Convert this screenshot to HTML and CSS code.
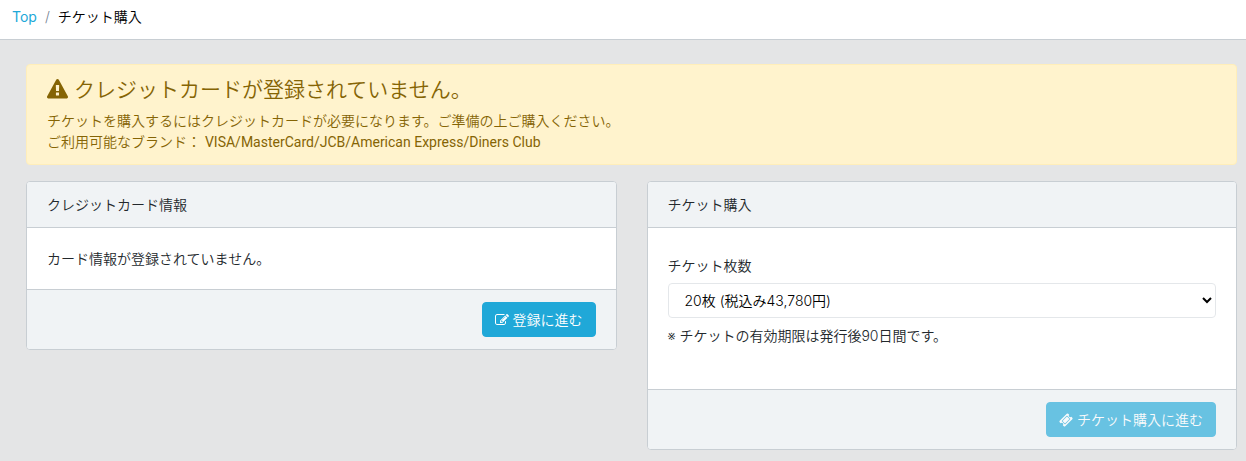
FILE: index.html
```html
<!DOCTYPE html>
<html lang="ja">
<head>
  <meta charset="UTF-8" />
  <meta name="viewport" content="width=device-width, initial-scale=1" />
  <title>チケット購入</title>
  <link rel="stylesheet" href="styles.css">
</head>
<body>
  <nav aria-label="breadcrumb">
    <ol class="breadcrumb">
      <li class="breadcrumb-item"><a href="#">Top</a></li>
      <li class="breadcrumb-item active" aria-current="page">チケット購入</li>
    </ol>
  </nav>

  <main class="container">
    <div class="alert" role="alert">
      <h4 class="alert-heading"><svg class="icon" viewBox="0 0 1792 1792" aria-hidden="true"><path d="M1024 1375v-190q0-14-9.5-23.5t-22.5-9.5h-198q-13 0-22.5 9.5t-9.5 23.5v190q0 14 9.5 23.5t22.5 9.5h198q13 0 22.5-9.5t9.5-23.5zm-2-374l18-459q0-12-10-19-13-11-24-11h-220q-11 0-24 11-10 7-10 21l17 457q0 10 10 16.5t24 6.5h185q14 0 23.5-6.5t10.5-16.5zm-14-934l768 1408q35 63-2 126-17 29-46.5 46t-63.5 17h-1536q-34 0-63.5-17t-46.5-46q-37-63-2-126l768-1408q17-31 47-49t65-18 65 18 47 49z"/></svg> クレジットカードが登録されていません。</h4>
      <p>チケットを購入するにはクレジットカードが必要になります。ご準備の上ご購入ください。<br>
      ご利用可能なブランド： <span class="brands">VISA/MasterCard/JCB/American Express/Diners Club</span></p>
    </div>

    <div class="row">
      <!-- Credit card -->
      <section class="card">
        <div class="card-header">クレジットカード情報</div>
        <div class="card-body">カード情報が登録されていません。</div>
        <div class="card-footer">
          <button type="button" class="btn"><svg class="icon" viewBox="0 0 1792 1792" aria-hidden="true"><path d="M888 1184l116-116-152-152-116 116v56h96v96h56zm440-720q-16-16-33 1l-350 350q-17 17-1 33t33-1l350-350q17-17 1-33zm80 594v190q0 119-84.5 203.5t-203.5 84.5h-832q-119 0-203.5-84.5t-84.5-203.5v-832q0-119 84.5-203.5t203.5-84.5h832q63 0 117 25 15 7 18 23 3 17-9 29l-49 49q-14 14-32 8-23-6-45-6h-832q-66 0-113 47t-47 113v832q0 66 47 113t113 47h832q66 0 113-47t47-113v-126q0-13 9-22l64-64q15-15 35-7t20 29zm-96-738l288 288-672 672h-288v-288zm444 132l-92 92-288-288 92-92q28-28 68-28t68 28l152 152q28 28 28 68t-28 68z"/></svg> 登録に進む</button>
        </div>
      </section>

      <!-- Ticket purchase -->
      <section class="card">
        <div class="card-header">チケット購入</div>
        <div class="card-body">
          <div class="form-group">
            <label for="ticketCount">チケット枚数</label>
            <select id="ticketCount" class="form-control">
              <option>20枚 (税込み43,780円)</option>
            </select>
            <p class="help">※ チケットの有効期限は発行後90日間です。</p>
          </div>
        </div>
        <div class="card-footer">
          <button type="button" class="btn" disabled><svg class="icon" viewBox="0 0 1792 1792" aria-hidden="true"><path d="M1024 452l316 316-572 572-316-316zm-211 979l618-618q19-19 19-45t-19-45l-362-362q-18-18-45-18t-45 18l-618 618q-19 19-19 45t19 45l362 362q18 18 45 18t45-18zm889-637l-907 908q-37 37-90.5 37t-90.5-37l-126-126q56-56 56-136t-56-136-136-56-136 56l-125-126q-37-37-37-90.5t37-90.5l907-906q37-37 90.5-37t90.5 37l125 125q-56 56-56 136t56 136 136 56 136-56l126 125q37 37 37 90.5t-37 90.5z"/></svg> チケット購入に進む</button>
        </div>
      </section>
    </div>
  </main>
</body>
</html>
```
FILE: styles.css
```css
* {
  box-sizing: border-box;
}
body {
  margin: 0;
  background: #e4e5e6;
  color: #23282c;
  font-family: Inter, "Noto Sans CJK JP", sans-serif;
  font-size: 14px;
  font-weight: 350;
  line-height: 21px;
}
p {
  margin: 0;
}
.icon {
  width: 1em;
  height: 1em;
  fill: currentColor;
  vertical-align: -2px;
}

/* Breadcrumb */
.breadcrumb {
  display: flex;
  margin: 0;
  padding: 6px 12px 12px;
  list-style: none;
  background: #fff;
  border-bottom: 1px solid #c8ced3;
}
.breadcrumb-item a {
  color: #20a8d8;
  font-weight: 400;
  text-decoration: none;
}
.breadcrumb-item.active {
  color: #000;
}
.breadcrumb-item.active::before {
  content: "/";
  padding: 0 8px;
  color: #73818f;
}

.container {
  padding: 24px 9px 11px 26px;
}

/* Alert */
.alert {
  margin-bottom: 16px;
  padding: 12px 20px 11px;
  color: #856404;
  background: #fff3cd;
  border: 1px solid #ffeeba;
  border-radius: 4px;
}
.alert-heading {
  margin: 0 0 8px;
  font-size: 21px;
  font-weight: 350;
  line-height: 25px;
}
.alert-heading .icon {
  vertical-align: -3px;
}
.brands {
  font-family: Roboto, sans-serif;
  font-weight: 400;
}

/* Cards */
.row {
  display: grid;
  grid-template-columns: 1fr 1fr;
  gap: 30px;
  align-items: start;
}
.card {
  background: #fff;
  border: 1px solid #c8ced3;
  border-radius: 4px;
  overflow: hidden;
}
.card-header {
  padding: 12px 20px;
  background: #f0f3f5;
  border-bottom: 1px solid #c8ced3;
}
.card-body {
  padding: 20px;
}
.card-footer {
  display: flex;
  justify-content: flex-end;
  padding: 12px 20px;
  background: #f0f3f5;
  border-top: 1px solid #c8ced3;
}

/* Form */
.form-group {
  padding: 7px 0 23px;
}
.form-group label {
  display: block;
  margin-bottom: 7px;
}
.form-control {
  display: block;
  width: 100%;
  height: 35px;
  padding: 0 0 0 12px;
  color: #000;
  background: #fff;
  border: 1px solid #e4e7ea;
  border-radius: 4px;
  font: inherit;
}
.help {
  margin-top: 7px;
}

.btn {
  height: 35px;
  padding: 0 12px;
  color: #fff;
  background: #20a8d8;
  border: 1px solid #20a8d8;
  border-radius: 4px;
  font: inherit;
  cursor: pointer;
}
.btn:disabled {
  opacity: 0.65;
  cursor: default;
}
```
